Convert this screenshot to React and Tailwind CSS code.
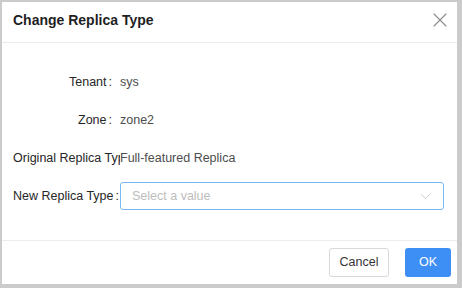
import { X, ChevronDown } from 'lucide-react'

const rows = [
  { label: 'Tenant', value: 'sys' },
  { label: 'Zone', value: 'zone2' },
  { label: 'Original Replica Type', value: 'Full-featured Replica' },
]

function Label({ children }) {
  return (
    <div className="w-[107px] shrink-0 overflow-hidden whitespace-nowrap text-right text-[#262626]">
      <span>{children}</span>
      <span className="ml-[2px] mr-[8px]">:</span>
    </div>
  )
}

export default function App() {
  return (
    <div className="w-[462px] h-[288px] bg-[#cbcbcb] pl-[2px] pt-[2px] pr-[5px] pb-[4px] font-['Liberation_Sans',Arial,sans-serif]">
      <div className="h-full bg-white flex flex-col">
        <header className="h-[41px] shrink-0 border-b border-[#ececec] pl-[11px] pr-[5px] flex items-center justify-between">
          <h1 className="text-[14px] font-semibold text-[#1f1f1f] pb-[3px]">Change Replica Type</h1>
          <X className="w-[24px] h-[24px] text-[#8c8c8c] mb-[4px]" strokeWidth={1.1} />
        </header>

        <main className="flex-1 pl-[11px] pr-[13px] pt-[25px] flex flex-col gap-[10px] text-[12.5px]">
          {rows.map((r) => (
            <div key={r.label} className="h-[28px] flex items-center">
              <Label>{r.label}</Label>
              <span className="text-[#4d4d4d] whitespace-nowrap">{r.value}</span>
            </div>
          ))}
          <div className="h-[28px] flex items-center">
            <Label>New Replica Type</Label>
            <div className="flex-1 h-[28px] rounded-[3px] border border-[#7ab7f7] pl-[11px] pr-[9px] flex items-center justify-between">
              <span className="text-[#bdbdbd]">Select a value</span>
              <ChevronDown className="w-[17px] h-[17px] text-[#bfbfbf]" strokeWidth={1.1} />
            </div>
          </div>
        </main>

        <footer className="h-[44px] shrink-0 border-t border-[#ececec] pr-[6px] flex items-center justify-end gap-[16px] text-[12.5px]">
          <button className="w-[60px] h-[29px] rounded-[3px] border border-[#d9d9d9] bg-white text-[#333]">
            Cancel
          </button>
          <button className="w-[46px] h-[29px] rounded-[3px] bg-[#3d8ff6] text-white">
            OK
          </button>
        </footer>
      </div>
    </div>
  )
}
